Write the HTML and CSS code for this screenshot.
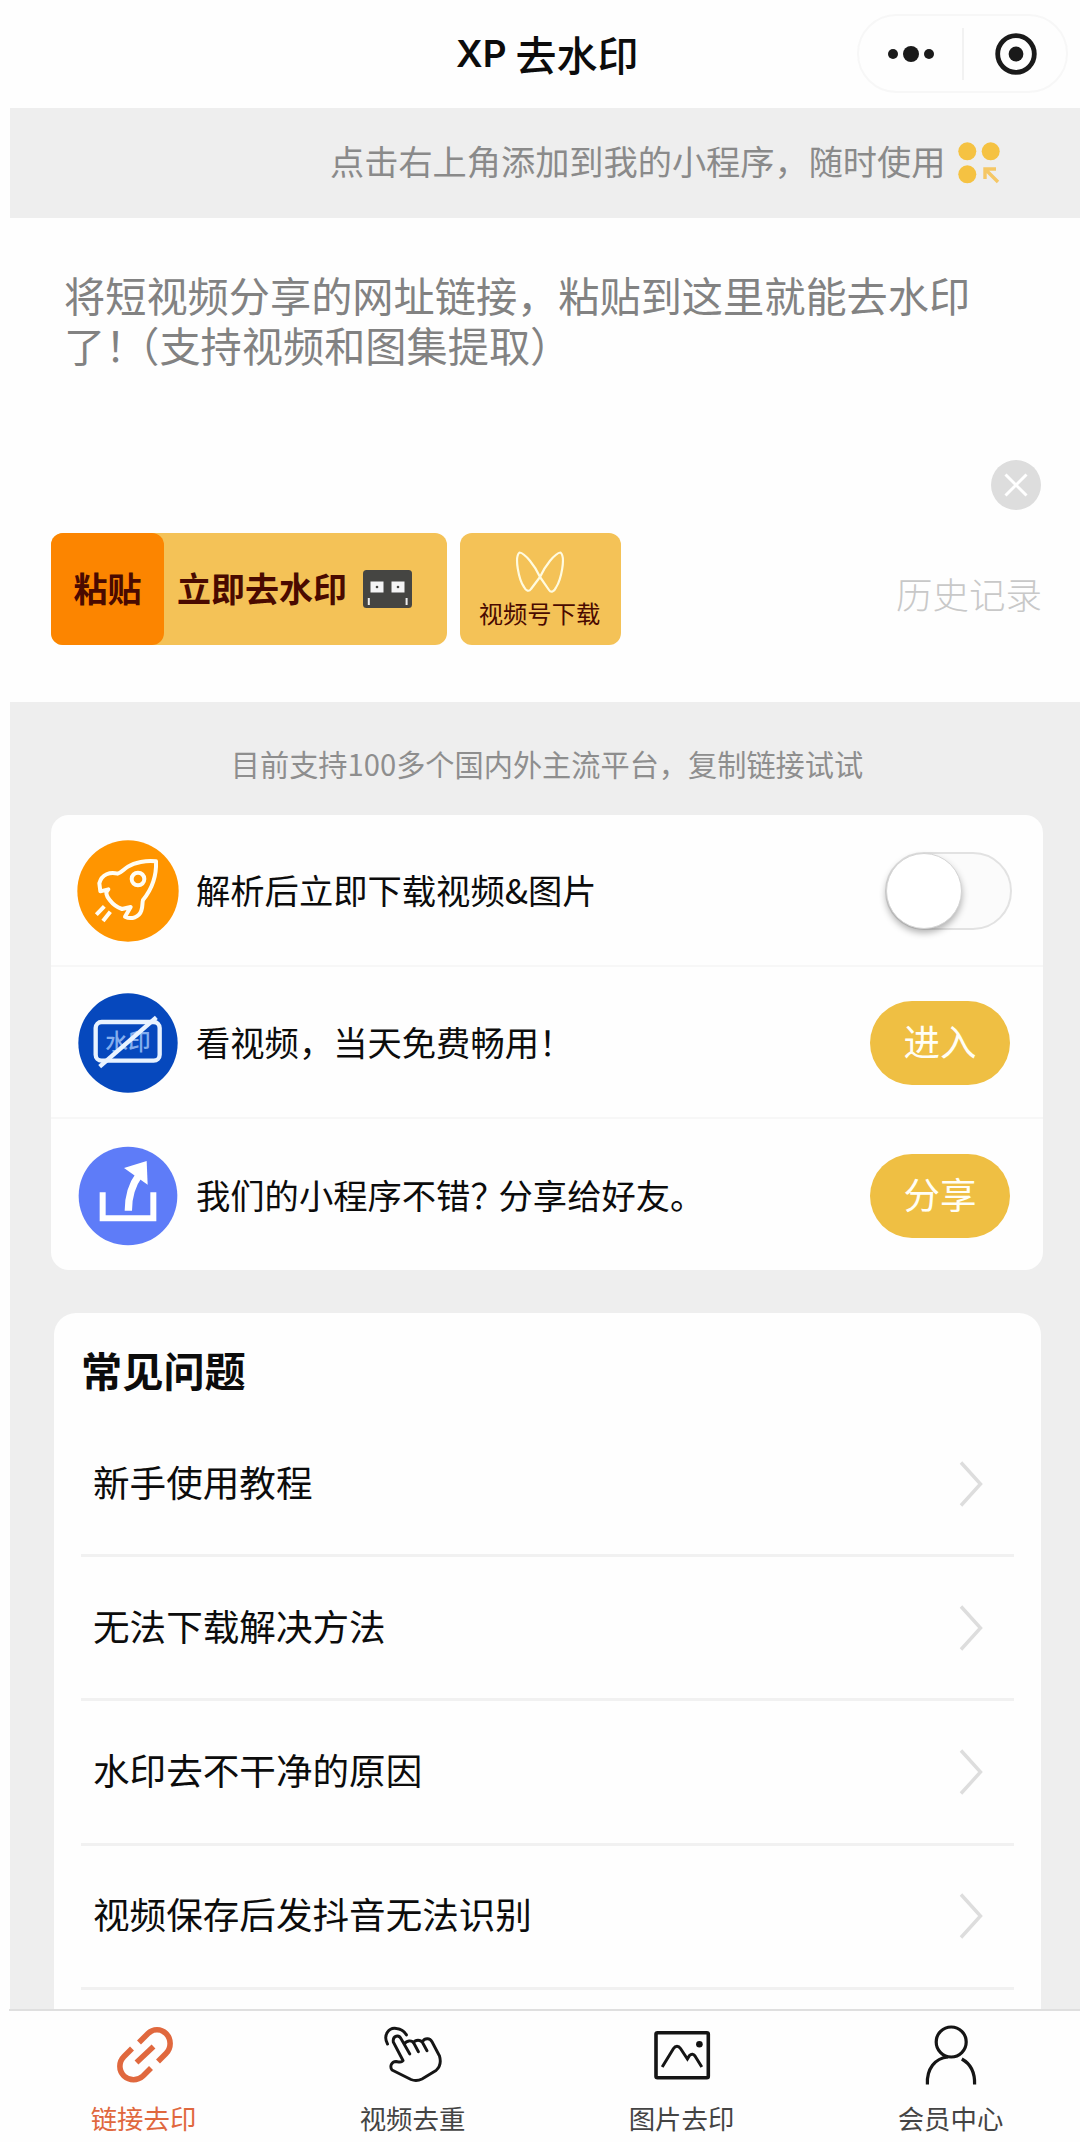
FILE: index.html
```html
<!DOCTYPE html>
<html lang="zh-CN">
<head>
<meta charset="utf-8">
<title>XP去水印</title>
<link rel="stylesheet" href="styles.css">
</head>
<body>
<div class="app">
  <header class="navbar">
    <h1 class="navbar-title"><span class="latin">XP</span>去水印</h1>
    <div class="capsule">
      <svg class="capsule-more" viewBox="0 0 50 20"><circle cx="7" cy="10" r="5"/><circle cx="25" cy="10" r="8"/><circle cx="43" cy="10" r="5"/></svg>
      <span class="capsule-line"></span>
      <svg class="capsule-close" viewBox="0 0 42 42"><circle cx="21" cy="21" r="18.3" fill="none" stroke="#1a1a1a" stroke-width="4.8"/><circle cx="21" cy="21" r="7.4"/></svg>
    </div>
  </header>

  <div class="notice">
    <span>点击右上角添加到我的小程序，随时使用</span>
    <svg class="notice-icon" viewBox="0 0 42 42"><g fill="#f5c242"><circle cx="9.3" cy="9.3" r="9"/><circle cx="32.7" cy="9.3" r="9"/><circle cx="9.3" cy="32.3" r="9"/></g><path d="M27 37V27H38M27.5 27.5L40 40" fill="none" stroke="#f5c765" stroke-width="3.4"/></svg>
  </div>

  <section class="composer">
    <p class="placeholder">将短视频分享的网址链接，粘贴到这里就能去水印<br>了<span class="half gap">！</span><span class="half">（</span>支持视频和图集提取<span class="half">）</span></p>
    <svg class="clear" viewBox="0 0 54 54"><circle cx="27" cy="27" r="25" fill="#dddddd"/><path d="M16.5 16.5L37.5 37.5M37.5 16.5L16.5 37.5" stroke="#fff" stroke-width="3"/></svg>
    <div class="actions">
      <div class="main-action">
        <div class="paste">粘贴</div>
        <div class="remove">立即去水印
          <svg class="robot" viewBox="0 0 49 38"><rect width="49" height="38" rx="3.5" fill="#454542"/><g fill="#f4f4f4"><rect x="7.5" y="11.5" width="13" height="11"/><rect x="28.5" y="11.5" width="13" height="11"/></g><g fill="#454542"><circle cx="14" cy="17" r="1.3"/><circle cx="35" cy="17" r="1.3"/></g><path d="M5.8 28V35M43.6 28V35" stroke="#eee" stroke-width="2"/></svg>
        </div>
      </div>
      <div class="channel">
        <svg class="butterfly" viewBox="0 0 50 42"><path d="M25 26C20 15 10 2 4.500 1.500C-1 6 4 29 9 36C11 40 14 41 16 38L25 26C30 15 40 2 45.500 1.500C51 6 46 29 41 36.500C39 41 36 42 34 39Z" fill="none" stroke="#fffbe0" stroke-width="2.2" stroke-linejoin="round"/></svg>
        <span>视频号下载</span>
      </div>
      <div class="history">历史记录</div>
    </div>
  </section>

  <main class="content">
    <p class="support">目前支持100多个国内外主流平台，复制链接试试</p>

    <section class="card">
      <div class="row">
        <svg class="row-icon" viewBox="52 60 306 306"><circle cx="205" cy="213" r="152" fill="#ff9500"/><g fill="none" stroke="#fffdf4" stroke-width="12" stroke-linejoin="round"><path d="M289 124C260 120 224 128 205 140C192 148 185 158 174 161C152 155 126 162 119 190L122 214L146 208C136 216 140 228 150 240C160 253 172 262 187 267L213 261L196 290C215 300 239 291 245 272C250 257 247 250 250 240C276 208 291 170 289 124Z"/><circle cx="235" cy="177" r="19"/><path d="M134 259L110 284M152 275L130 303"/></g></svg>
        <span class="row-text">解析后立即下载视频&amp;图片</span>
        <span class="switch"><span class="knob"></span></span>
      </div>
      <div class="row">
        <svg class="row-icon" viewBox="51 514 306 306"><circle cx="204" cy="667" r="149" fill="#0648bd"/><rect x="107" y="604" width="192" height="116" rx="18" fill="none" stroke="#e9f3ff" stroke-width="13"/><text x="204" y="689" class="mark">水印</text><path d="M119 738L289 590" stroke="#e9f3ff" stroke-width="13"/></svg>
        <span class="row-text">看视频，当天免费畅用！</span>
        <span class="pill">进入</span>
      </div>
      <div class="row">
        <svg class="row-icon" viewBox="51 971 306 306"><circle cx="204" cy="1124" r="148" fill="#5e7cf8"/><path d="M128 1113V1191H280V1113" fill="none" stroke="#fff" stroke-width="18"/><path d="M205 1168C205 1130 212 1095 238 1060" fill="none" stroke="#fff" stroke-width="22"/><path d="M192 1040L260 1019L263 1090Z" fill="#fff"/></svg>
        <span class="row-text">我们的小程序不错<span class="question">？</span>分享给好友。</span>
        <span class="pill">分享</span>
      </div>
    </section>

    <section class="faq">
      <h2 class="faq-title">常见问题</h2>
      <div class="faq-row"><span>新手使用教程</span><svg class="chevron" viewBox="0 0 24 46"><path d="M2 1.500L21.500 23L2 44.500"/></svg></div>
      <div class="faq-row"><span>无法下载解决方法</span><svg class="chevron" viewBox="0 0 24 46"><path d="M2 1.500L21.500 23L2 44.500"/></svg></div>
      <div class="faq-row"><span>水印去不干净的原因</span><svg class="chevron" viewBox="0 0 24 46"><path d="M2 1.500L21.500 23L2 44.500"/></svg></div>
      <div class="faq-row"><span>视频保存后发抖音无法识别</span><svg class="chevron" viewBox="0 0 24 46"><path d="M2 1.500L21.500 23L2 44.500"/></svg></div>
    </section>
  </main>

  <nav class="tabbar">
    <div class="tab active">
      <svg viewBox="0 0 64 64" stroke-width="5.6"><path d="M27 20.500L36 11.500C41 6.500 49 6.500 54 11.500C59.500 17 59.500 26 54 31.500L46 39.500M20 26.500L12 34.500C6.500 40 6.500 48.500 12 54C17.500 59 25.500 59 31 54L39 46M24.500 40.500L41.500 24.500"/></svg>
      <span>链接去印</span>
    </div>
    <div class="tab">
      <svg viewBox="0 0 64 64" stroke-width="2.9" stroke-linecap="round" stroke-linejoin="round"><path d="M6.500 22C1.500 12.500 8.500 5 15.500 6.500C20 7 23.500 9.500 25.500 13M22 38.500L12.300 20C11.500 13.500 18 12 20.500 17.500L28.800 32M23.500 22C25 18.500 31 17.500 33 21.500L37.400 29.700M32.500 20.500C34.500 17.500 39.500 17.500 41.500 20.500L46 28.700M41.500 19.500C44 15.500 49 16 51 19.700L58.500 34C60.500 41 59 45 55 48.500L41 57C37 59 33.500 59 30 57.500L11 48C8.500 44.500 10.500 39.500 15 39.500C18 40 21 41 22 38.500"/></svg>
      <span>视频去重</span>
    </div>
    <div class="tab">
      <svg viewBox="0 0 64 64" stroke-width="3.600"><rect x="6" y="10.700" width="52.300" height="45" rx="1.500"/><path d="M12.200 45L23.500 26.500C25.500 23.500 28.500 23.500 30.500 26.500L37.400 37L39.500 33.500C41.500 31.500 43.500 32 45 34L51.800 45" stroke-width="3"/><circle cx="49.400" cy="22.300" r="3.300" fill="#111" stroke="none"/></svg>
      <span>图片去印</span>
    </div>
    <div class="tab">
      <svg viewBox="0 0 64 64" stroke-width="3.200"><circle cx="32.200" cy="20" r="15"/><path d="M8.400 62.500C7.500 47 16 36 29 35M42.800 37C51 41.500 56 50 55.600 62.500"/></svg>
      <span>会员中心</span>
    </div>
  </nav>
</div>
</body>
</html>
```

FILE: styles.css
```css
* { box-sizing: border-box; }

body {
  margin: 0;
  background: #fefefe;
  color: #0c0c0c;
  font-family: "Noto Sans CJK SC", sans-serif;
  text-spacing-trim: space-all;
}

h1, h2, p { margin: 0; }

.app {
  display: flex;
  flex-direction: column;
  width: 1080px;
  height: 2142px;
  padding-left: 10px;
  overflow: hidden;
}

.navbar {
  display: grid;
  grid-template-columns: 847px 211px;
  flex: none;
  height: 108px;
  padding-top: 14px;
}

.navbar-title {
  display: flex;
  align-items: center;
  gap: 9px;
  height: 77px;
  padding-left: 446px;
  font-size: 41px;
  font-weight: 500;
  line-height: 60px;
}

.latin {
  margin-top: 3px;
  font-family: Inter, sans-serif;
  font-size: 37px;
  font-weight: 600;
}

.capsule {
  display: flex;
  align-items: center;
  height: 79px;
  padding-left: 27px;
  border: 2px solid #f7f7f7;
  border-radius: 40px;
  fill: #1a1a1a;
}

.capsule-more { width: 50px; height: 20px; }
.capsule-line { width: 2px; height: 52px; margin-left: 26px; background: #f2f2f2; }
.capsule-close { width: 42px; height: 42px; margin-left: 31px; }

.notice {
  display: flex;
  align-items: center;
  flex: none;
  gap: 13px;
  height: 110px;
  padding-left: 320px;
  background: #eeeeee;
  color: #8a8a8a;
  font-size: 34.2px;
  line-height: 50px;
}

.notice span { margin-top: -6px; }
.notice-icon { width: 42px; height: 42px; }

.composer {
  display: flex;
  flex-direction: column;
  flex: none;
  height: 484px;
  padding: 51px 38px 0 41px;
}

.placeholder {
  height: 189px;
  margin-left: 13px;
  color: #828282;
  font-size: 41.2px;
  line-height: 50px;
  white-space: nowrap;
}

.half { font-feature-settings: "halt"; }
.gap { letter-spacing: 13px; }

.clear {
  flex: none;
  align-self: flex-end;
  width: 54px;
  height: 54px;
  margin-right: -1px;
}

.actions {
  display: flex;
  gap: 13px;
  height: 112px;
  margin-top: 21px;
}

.main-action {
  display: flex;
  width: 396px;
  border-radius: 12px;
  background: #f4c257;
  color: #4a0a00;
  font-size: 34px;
  font-weight: 700;
  line-height: 109px;
}

.paste {
  width: 113px;
  border-radius: 12px;
  background: #fc8500;
  text-align: center;
}

.remove {
  display: flex;
  gap: 16px;
  padding-left: 13px;
}

.robot { width: 49px; height: 38px; margin-top: 37px; }

.channel {
  display: flex;
  flex-direction: column;
  align-items: center;
  width: 161px;
  padding: 18px 2px 0 0;
  border-radius: 12px;
  background: #f4c257;
  color: #4a0a00;
  font-size: 24.3px;
  line-height: 36px;
}

.butterfly { width: 50px; height: 42px; }
.channel span { margin-top: 2px; }

.history {
  margin-left: auto;
  color: #c8c8c8;
  font-size: 36.5px;
  font-weight: 300;
  line-height: 122px;
}

.content {
  flex: none;
  height: 1307px;
  padding: 36px 37px 0 41px;
  background: #eeeeee;
  overflow: hidden;
}

.support {
  height: 77px;
  color: #8e8e8e;
  font-size: 29.2px;
  line-height: 50px;
  text-align: center;
}

.card {
  height: 455px;
  border-radius: 18px;
  background: #fefefe;
}

.row {
  display: flex;
  align-items: center;
  height: 152px;
  padding: 2px 33px 0 26px;
  border-bottom: 2px solid #f7f7f7;
}

.row:last-child { border-bottom: 0; }
.row-icon { width: 102px; height: 102px; }

.mark {
  fill: #84aeee;
  font-size: 68px;
  font-weight: 500;
  text-anchor: middle;
}

.row-text {
  margin: -5px auto 0 17px;
  font-size: 34.3px;
}

.question { font-feature-settings: "halt"; letter-spacing: 11px; }

.switch {
  width: 127px;
  height: 78px;
  margin-right: -2px;
  border: 2px solid #e2e2e2;
  border-radius: 39px;
  background: #fbfbfb;
}

.knob {
  display: block;
  width: 76px;
  height: 76px;
  margin: -1px;
  border: 1px solid #d4d4d4;
  border-radius: 50%;
  background: #ffffff;
  box-shadow: 0 4px 7px rgba(0, 0, 0, 0.3);
}

.pill {
  width: 140px;
  height: 84px;
  border-radius: 42px;
  background: #efbf43;
  color: #fffef6;
  font-size: 36.5px;
  line-height: 80px;
  text-align: center;
}

.faq {
  height: 800px;
  margin: 43px 2px 0 3px;
  padding: 29px 27px 0 27px;
  border-radius: 22px;
  background: #fefefe;
}

.faq-title {
  height: 71px;
  font-size: 41.2px;
  font-weight: 700;
  line-height: 54px;
}

.faq-row {
  display: flex;
  align-items: center;
  justify-content: space-between;
  height: 144.2px;
  padding: 0 31px 0 12px;
  border-bottom: 3px solid #f1f1f1;
  font-size: 36.6px;
}

.faq-row span { margin-top: -5px; }

.chevron {
  width: 24px;
  height: 46px;
  fill: none;
  stroke: #dddddd;
  stroke-width: 3.4px;
}

.tabbar {
  display: grid;
  grid-template-columns: repeat(4, 269px);
  flex: none;
  height: 133px;
  margin-left: -1px;
  border-top: 2px solid #dfdfdf;
}

.tab {
  display: flex;
  flex-direction: column;
  align-items: center;
  padding-top: 11px;
  color: #444444;
  font-size: 26.4px;
  line-height: 40px;
}

.tab svg {
  width: 64px;
  height: 64px;
  fill: none;
  stroke: #151515;
}

.tab span { margin-top: 12px; }
.tab.active { color: #e0683e; }
.tab.active svg { stroke: #e0683e; }
```
